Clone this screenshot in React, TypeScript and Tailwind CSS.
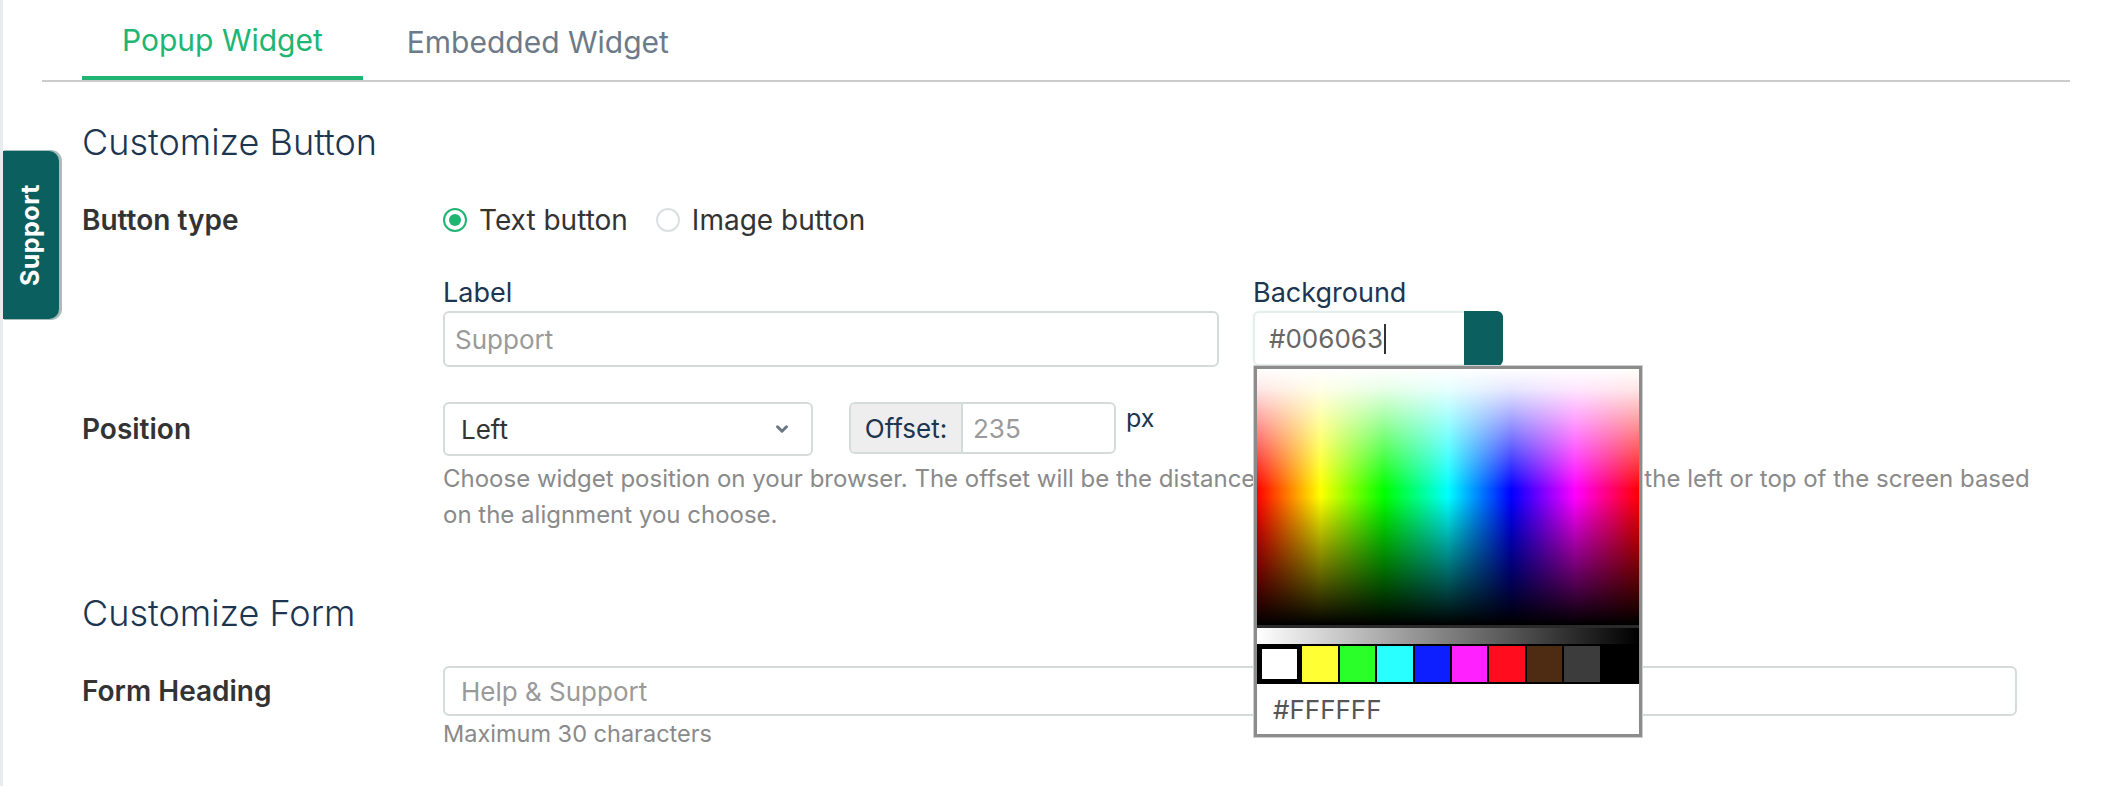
import React from 'react';
import { ChevronDown } from 'lucide-react';

const swatches = ['#ffffff', '#ffff33', '#2aff2a', '#2affff', '#0d1fff', '#ff22ff', '#ff0d1f', '#4d2c13', '#3c3c3c', '#000000'];

const Radio: React.FC<{ checked?: boolean; label: string }> = ({ checked, label }) => (
  <label className="flex items-center gap-[12px]">
    <span
      className={`flex h-[24px] w-[24px] items-center justify-center rounded-full border-2 bg-white ${
        checked ? 'border-[#21b573]' : 'border-[#dcdfe2]'
      }`}
    >
      {checked && <span className="h-[12px] w-[12px] rounded-full bg-[#21b573]" />}
    </span>
    <span className="text-[28px] text-[#333333]">{label}</span>
  </label>
);

const ColorPicker: React.FC = () => (
  <div className="absolute left-[1px] top-full z-10 w-[388px] border-[3px] border-[#8c8c8c] bg-white shadow-[0_0_0_1px_#d0d0d0]">
    <div className="relative h-[256px] bg-[linear-gradient(to_right,#ff0000_0%,#ffff00_16.6%,#00ff00_33.3%,#00ffff_50%,#0000ff_66.6%,#ff00ff_83.3%,#ff0000_100%)]">
      <div className="absolute inset-0 bg-[linear-gradient(to_bottom,#ffffff_0%,rgba(255,255,255,0.9)_8%,rgba(255,255,255,0)_47%,rgba(0,0,0,0)_50%,#000000_100%)]" />
    </div>
    <div className="h-[3px] bg-[#2a2a2a]" />
    <div className="h-[16px] bg-[linear-gradient(to_right,#ffffff,#000000)]" />
    <div className="flex gap-[2px] bg-black p-[2px]">
      {swatches.map((c, i) => (
        <div
          key={c}
          className={`h-[36px] flex-1 ${i === 0 ? 'border-[3px] border-black' : ''}`}
          style={{ backgroundColor: c }}
        />
      ))}
    </div>
    <div className="flex h-[50px] items-center px-[16px] text-[26px] text-[#555555]">#FFFFFF</div>
  </div>
);

export default function App() {
  return (
    <div
      className="relative h-[786px] w-full overflow-hidden border-l-[3px] border-[#e9ecef] bg-white"
      style={{ fontFamily: 'Inter, "Open Sans", Arial, sans-serif' }}
    >
      {/* floating support tab */}
      <div className="absolute left-0 top-[151px] flex h-[168px] w-[56px] items-center justify-center rounded-r-[10px] bg-[#0b5f5f] shadow-[2px_0_0_1px_#a9bcbc]">
        <span className="rotate-180 text-[25px] font-bold tracking-[0.5px] text-white [writing-mode:vertical-rl]">
          Support
        </span>
      </div>

      <div className="pl-[39px] pr-[40px]">
        {/* tabs */}
        <div className="flex border-b-2 border-[#cccccc] pl-[40px]">
          <div className="-mb-[2px] flex h-[80px] items-center border-b-4 border-[#21b573] px-[40px] pt-[4px] text-[30px] text-[#21b573]">
            Popup Widget
          </div>
          <div className="flex h-[80px] items-center px-[44px] pt-[4px] text-[30px] text-[#6c7a89]">Embedded Widget</div>
        </div>

        <div className="pl-[40px] pr-[53px]">
          <h2 className="mt-[38px] text-[36px] leading-[44px] font-light text-[#1c3550]">Customize Button</h2>

          <div className="mt-[38px] grid grid-cols-[361px_1fr]">
            <div className="text-[28px] leading-[36px] font-semibold text-[#333333]">Button type</div>
            <div className="flex h-[36px] items-center gap-[28px]">
              <Radio checked label="Text button" />
              <Radio label="Image button" />
            </div>
          </div>

          <div className="mt-[37px] grid grid-cols-[361px_1fr]">
            <div />
            <div className="flex gap-[34px]">
              <div className="w-[776px]">
                <div className="text-[27px] leading-[36px] text-[#1c3550]">Label</div>
                <div className="flex h-[56px] items-center rounded-[6px] border-2 border-[#d5dadb] px-[10px] text-[26px] text-[#9a9a9a]">
                  Support
                </div>
              </div>
              <div>
                <div className="text-[27px] leading-[36px] text-[#1c3550]">Background</div>
                <div className="relative flex h-[55px] w-[250px]">
                  <div className="flex flex-1 items-center rounded-l-[6px] border-2 border-r-0 border-[#e3efed] px-[14px] text-[26px] text-[#666666] shadow-[0_0_2px_#e6f3f0]">
                    #006063<span className="ml-[1px] h-[30px] w-[2px] bg-[#333333]" />
                  </div>
                  <div className="w-[39px] rounded-r-[6px] bg-[#0b5f5f]" />
                  <ColorPicker />
                </div>
              </div>
            </div>
          </div>

          <div className="mt-[35px] grid grid-cols-[361px_1fr]">
            <div className="pt-[9px] text-[28px] leading-[36px] font-semibold text-[#333333]">Position</div>
            <div>
              <div className="flex items-start">
                <div className="flex h-[54px] w-[370px] items-center justify-between rounded-[6px] border-2 border-[#d5dadb] pl-[16px] pr-[20px] text-[26px] text-[#333333]">
                  Left
                  <ChevronDown size={18} strokeWidth={4} className="text-[#6b7785]" />
                </div>
                <div className="ml-[36px] flex h-[52px] w-[267px] overflow-hidden rounded-[6px] border-2 border-[#d5dadb]">
                  <div className="flex w-[112px] items-center justify-center border-r-2 border-[#d5dadb] bg-[#eeeeee] text-[26px] text-[#1c3550]">
                    Offset:
                  </div>
                  <div className="flex flex-1 items-center px-[10px] text-[26px] text-[#9a9a9a]">235</div>
                </div>
                <div className="ml-[10px] text-[25px] leading-[32px] text-[#1c3550]">px</div>
              </div>
              <p className="mt-[5px] whitespace-nowrap text-[24px] leading-[36px] text-[#8a8a8a]">
                Choose widget position on your browser. The offset will be the distance
                <span className="inline-block w-[389px] overflow-hidden whitespace-nowrap align-top">&nbsp;in pixels of the widget from</span>
                the left or top of the screen based
                <br />
                on the alignment you choose.
              </p>
            </div>
          </div>

          <h2 className="mt-[58px] text-[36px] leading-[44px] font-light text-[#1c3550]">Customize Form</h2>

          <div className="mt-[31px] grid grid-cols-[361px_1fr]">
            <div className="pt-[7px] text-[28px] leading-[36px] font-semibold text-[#333333]">Form Heading</div>
            <div>
              <div className="flex h-[50px] items-center rounded-[6px] border-2 border-[#d5dadb] px-[16px] text-[26px] text-[#9a9a9a]">
                Help &amp; Support
              </div>
              <div className="mt-[3px] text-[23.5px] leading-[30px] text-[#8a8a8a]">Maximum 30 characters</div>
            </div>
          </div>
        </div>
      </div>
    </div>
  );
}
